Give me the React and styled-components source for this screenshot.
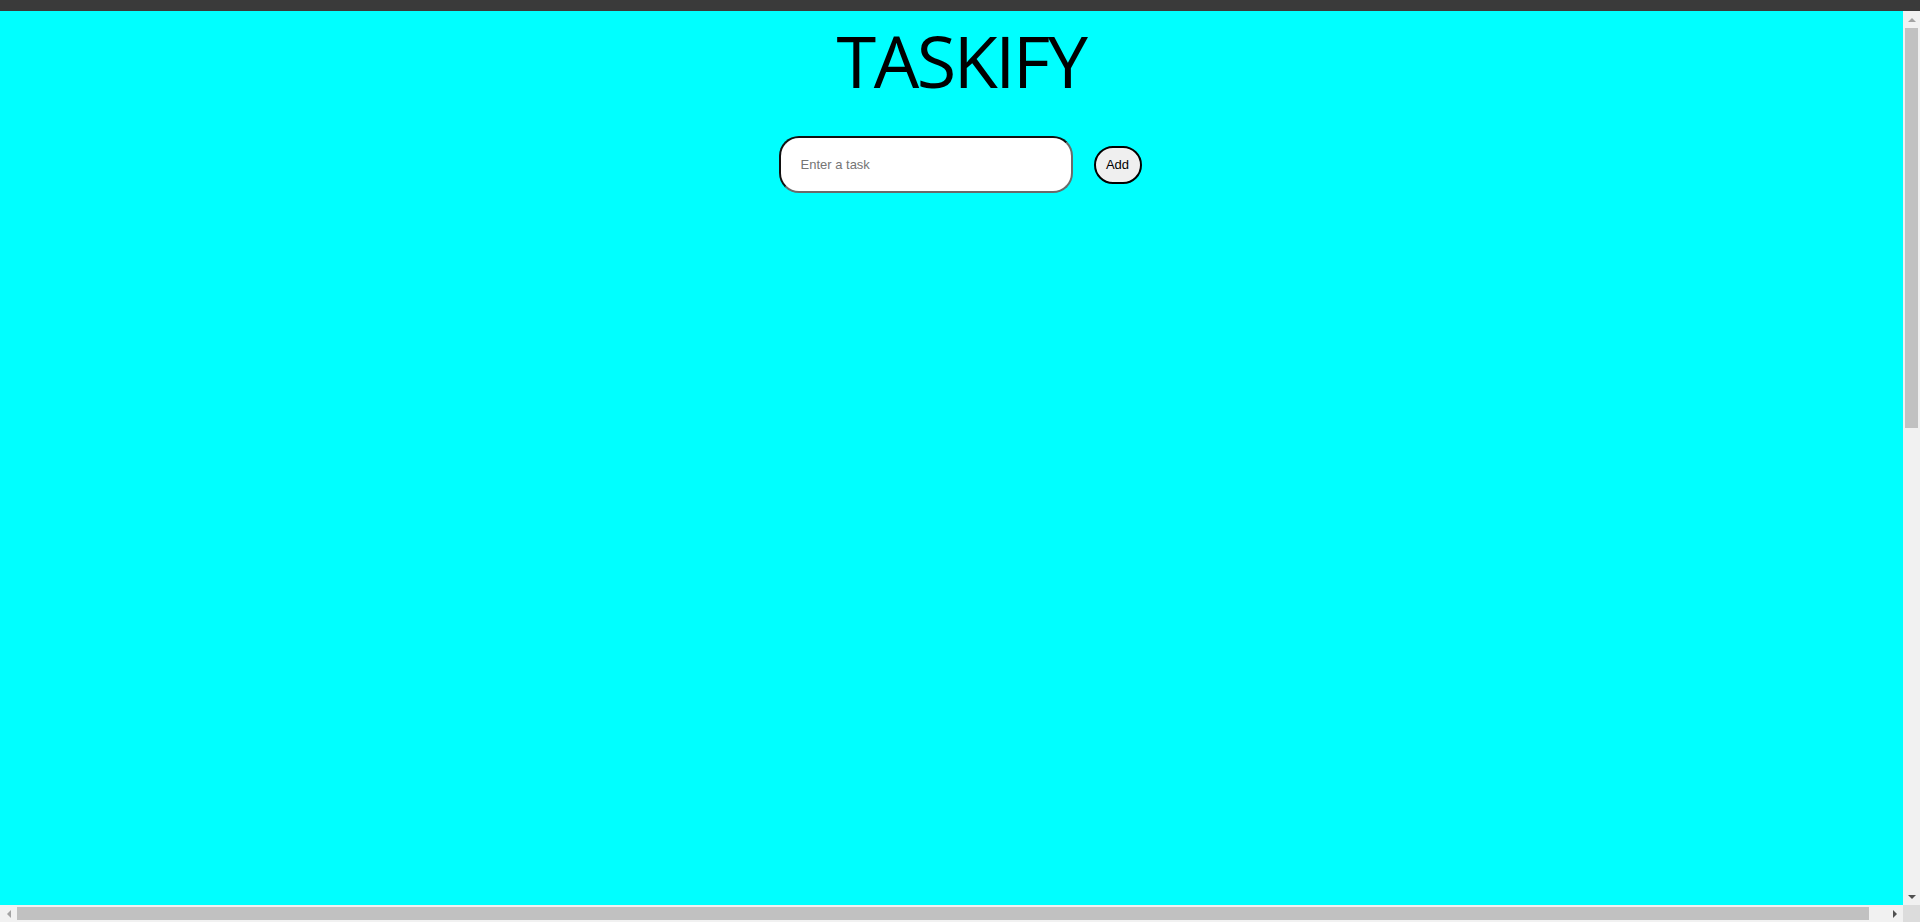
import React from 'react';
import styled, { createGlobalStyle } from 'styled-components';

const GlobalStyle = createGlobalStyle`
  html, body {
    margin: 0;
    padding: 0;
    height: 100%;
    overflow: hidden;
  }
  #root {
    height: 100%;
  }
`;

const Page = styled.div`
  height: 100vh;
  display: flex;
  flex-direction: column;
`;

const TopBar = styled.div`
  height: 11px;
  flex-shrink: 0;
  background: #3a3a3a;
`;

const Viewport = styled.div`
  flex: 1;
  display: flex;
  min-height: 0;
`;

const Content = styled.main`
  flex: 1;
  background: #00ffff;
  display: flex;
  flex-direction: column;
  align-items: center;
  padding-left: 17px;
`;

const Title = styled.h1`
  margin: 0;
  padding-left: 2px;
  font-family: "Open Sans", "Noto Sans", sans-serif;
  font-weight: 400;
  font-size: 72px;
  line-height: 98px;
  letter-spacing: -2.5px;
  color: #000;
`;

const TaskForm = styled.form`
  margin-top: 27px;
  display: flex;
  align-items: center;
  gap: 21px;
`;

const TaskInput = styled.input`
  box-sizing: border-box;
  width: 294px;
  height: 57px;
  padding: 0 20px;
  border: 2px solid;
  border-color: #111 #6a6a6a #6a6a6a #111;
  border-radius: 20px;
  background: #fff;
  font-family: "Liberation Sans", Arial, sans-serif;
  font-size: 13px;
  outline: none;

  &::placeholder {
    color: #757575;
  }
`;

const AddButton = styled.button`
  box-sizing: border-box;
  width: 48px;
  height: 38px;
  padding: 0;
  border: 2px solid #000;
  border-radius: 20px;
  background: #efefef;
  font-family: "Liberation Sans", Arial, sans-serif;
  font-size: 13px;
  color: #000;
  cursor: pointer;
`;

const VScroll = styled.div`
  width: 17px;
  flex-shrink: 0;
  background: #f1f1f1;
  display: flex;
  flex-direction: column;
  align-items: center;
`;

const HScrollRow = styled.div`
  height: 17px;
  flex-shrink: 0;
  display: flex;
`;

const HScroll = styled.div`
  flex: 1;
  background: #f1f1f1;
  display: flex;
  align-items: center;
`;

const Corner = styled.div`
  width: 17px;
  background: #dcdcdc;
`;

const ArrowBox = styled.div`
  width: 17px;
  height: 17px;
  flex-shrink: 0;
  display: flex;
  align-items: center;
  justify-content: center;
`;

const VThumb = styled.div`
  width: 13px;
  height: 400px;
  background: #c1c1c1;
`;

const HThumb = styled.div`
  width: 1852px;
  height: 13px;
  background: #c1c1c1;
`;

const Spacer = styled.div`
  flex: 1;
`;

const Arrow = ({ dir, color }) => {
  const pts = {
    up: '0,4 4,0 8,4',
    down: '0,0 8,0 4,4',
    left: '4,0 4,8 0,4',
    right: '0,0 0,8 4,4',
  }[dir];
  const vertical = dir === 'up' || dir === 'down';
  return (
    <svg width={vertical ? 8 : 4} height={vertical ? 4 : 8} viewBox={vertical ? '0 0 8 4' : '0 0 4 8'}>
      <polygon points={pts} fill={color} />
    </svg>
  );
};

const App = () => {
  return (
    <Page>
      <GlobalStyle />
      <TopBar />
      <Viewport>
        <Content>
          <Title>TASKIFY</Title>
          <TaskForm onSubmit={(e) => e.preventDefault()}>
            <TaskInput type="text" placeholder="Enter a task" />
            <AddButton type="submit">Add</AddButton>
          </TaskForm>
        </Content>
        <VScroll>
          <ArrowBox><Arrow dir="up" color="#a3a3a3" /></ArrowBox>
          <VThumb />
          <Spacer />
          <ArrowBox><Arrow dir="down" color="#505050" /></ArrowBox>
        </VScroll>
      </Viewport>
      <HScrollRow>
        <HScroll>
          <ArrowBox><Arrow dir="left" color="#a3a3a3" /></ArrowBox>
          <HThumb />
          <Spacer />
          <ArrowBox><Arrow dir="right" color="#505050" /></ArrowBox>
        </HScroll>
        <Corner />
      </HScrollRow>
    </Page>
  );
};

export default App;
